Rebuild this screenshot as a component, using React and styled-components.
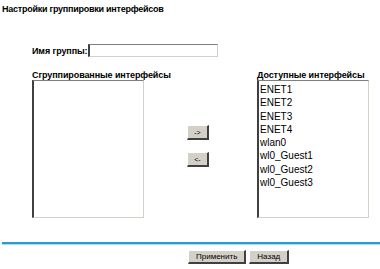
import styled, { createGlobalStyle } from "styled-components";

const GlobalStyle = createGlobalStyle`
  body {
    margin: 0;
    background: #fff;
    font-family: "Liberation Sans", Arial, sans-serif;
    color: #000;
  }
`;

const available = [
  "ENET1",
  "ENET2",
  "ENET3",
  "ENET4",
  "wlan0",
  "wl0_Guest1",
  "wl0_Guest2",
  "wl0_Guest3",
];

const App = () => {
  return (
    <Page>
      <GlobalStyle />
      <Title>Настройки группировки интерфейсов</Title>

      <NameRow>
        <Label>Имя группы:</Label>
        <NameInput type="text" />
      </NameRow>

      <Lists>
        <Column>
          <Label>Сгруппированные интерфейсы</Label>
          <ListBox />
        </Column>

        <Mover>
          <SmallButton>-&gt;</SmallButton>
          <SmallButton>&lt;-</SmallButton>
        </Mover>

        <Column>
          <Label>Доступные интерфейсы</Label>
          <ListBox>
            {available.map((name) => (
              <Item key={name}>{name}</Item>
            ))}
          </ListBox>
        </Column>
      </Lists>

      <Divider />

      <Actions>
        <ActionButton>Применить</ActionButton>
        <ActionButton>Назад</ActionButton>
      </Actions>
    </Page>
  );
};

const Page = styled.div`
  width: 380px;
  height: 269px;
  padding: 4px 0 0 2px;
  box-sizing: border-box;
  overflow: hidden;
`;

const Title = styled.div`
  font-size: 9px;
  font-weight: bold;
  line-height: 11px;
  letter-spacing: -0.25px;
`;

const Label = styled.div`
  font-size: 9px;
  font-weight: bold;
  line-height: 10px;
  letter-spacing: -0.1px;
  white-space: nowrap;
`;

const NameRow = styled.div`
  display: flex;
  align-items: center;
  gap: 1px;
  margin: 29px 0 0 30px;
`;

const NameInput = styled.input`
  width: 130px;
  height: 13px;
  box-sizing: border-box;
  margin: 0;
  padding: 0;
  border-style: solid;
  border-width: 1px 1px 1px 2px;
  border-color: #7f7f7f #d4d0c8 #d4d0c8 #404040;
  background: #fff;
`;

const Lists = styled.div`
  display: grid;
  grid-template-columns: 112px 113px 112px;
  margin: 13px 0 0 30px;
`;

const Column = styled.div`
  display: flex;
  flex-direction: column;
`;

const ListBox = styled.div`
  height: 138px;
  box-sizing: border-box;
  padding: 2px 0 0 1px;
  border-style: solid;
  border-width: 1px 1px 1px 2px;
  border-color: #7f7f7f #d4d0c8 #d4d0c8 #404040;
  background: #fff;
`;

const Item = styled.div`
  font-size: 10px;
  line-height: 13.3px;
  white-space: nowrap;
`;

const Mover = styled.div`
  display: flex;
  flex-direction: column;
  justify-content: center;
  gap: 12px;
  padding: 4px 0 0 43px;
`;

const SmallButton = styled.button`
  width: 22px;
  height: 15px;
  padding: 0;
  margin: 0;
  font-family: "Liberation Sans", Arial, sans-serif;
  font-size: 7px;
  color: #000;
  background: #d4d0c8;
  border-style: solid;
  border-width: 1px 2px 2px 1px;
  border-color: #fff #404040 #404040 #fff;
`;

const Divider = styled.div`
  height: 2px;
  margin: 24px 0 0 0;
  background: #2a9bd3;
  border-bottom: 1px solid #a9d8ef;
`;

const Actions = styled.div`
  display: flex;
  gap: 3px;
  margin: 5px 0 0 186px;
`;

const ActionButton = styled.button`
  height: 14px;
  padding: 0 7px;
  margin: 0;
  font-family: "Liberation Sans", Arial, sans-serif;
  font-size: 8px;
  color: #000;
  background: #d4d0c8;
  border-style: solid;
  border-width: 1px 2px 2px 1px;
  border-color: #fff #404040 #404040 #fff;
  line-height: 10px;
`;

export default App;
